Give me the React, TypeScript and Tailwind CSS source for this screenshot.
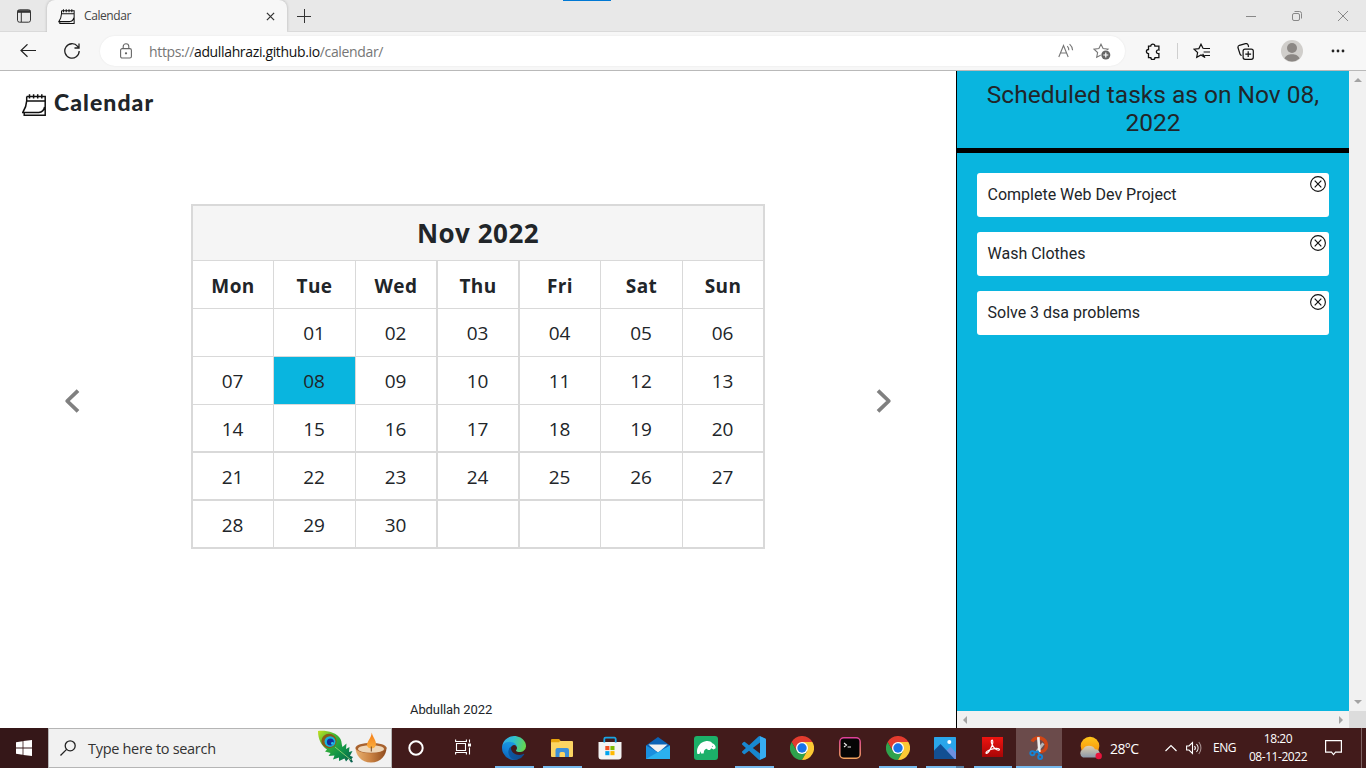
import React from "react";

const weekdays = ["Mon", "Tue", "Wed", "Thu", "Fri", "Sat", "Sun"];
const weeks = [
  ["", "01", "02", "03", "04", "05", "06"],
  ["07", "08", "09", "10", "11", "12", "13"],
  ["14", "15", "16", "17", "18", "19", "20"],
  ["21", "22", "23", "24", "25", "26", "27"],
  ["28", "29", "30", "", "", "", ""],
];
const tasks = ["Complete Web Dev Project", "Wash Clothes", "Solve 3 dsa problems"];
const colBorder = ["border-r", "border-r", "border-r-2", "border-r-2", "border-r", "border-r", "border-r-2"];

function CalendarIcon({ className }: { className: string }) {
  return (
    <svg viewBox="0 0 24 22" className={className} fill="none" stroke="#111" strokeWidth="1.5">
      <path d="M4.7 2.6H23.2V21.2H2.2V18.6M4.7 2.6V6.9H23.2M4.7 6.9C4.5 12 2.6 15.6.8 18.5H16.8C20 18.2 22 16 22.6 13M7.5.2V4.6M11.6.2V4.6M15.7.2V4.6M19.8.2V4.6" />
    </svg>
  );
}

function TabStrip() {
  return (
    <div className="relative flex h-8 bg-[#e8e8e8]">
      <div className="absolute left-[563px] top-0 h-px w-12 bg-[#0078d4]" />
      <div className="flex w-[47px] items-center pl-[17px] border-b border-[#dadada]">
        <svg viewBox="0 0 14 14" className="h-[14px] w-[14px]" fill="none" stroke="#333" strokeWidth="1">
          <rect x=".5" y=".8" width="13" height="12.4" rx="2" />
          <path d="M.5 2.5H13.5" strokeWidth="2.6" />
          <path d="M4.3 3V13" />
        </svg>
      </div>
      <div className="flex w-[240px] items-center rounded-t-lg bg-[#f7f7f7] pl-[11px] pr-[12px] shadow-[0_0_3px_rgba(0,0,0,0.25)]">
        <CalendarIcon className="h-[15px] w-[17px]" />
        <span className="ml-[9px] flex-1 text-[12px] tracking-[-0.42px] text-[#444]">Calendar</span>
        <svg viewBox="0 0 10 10" className="h-[9px] w-[9px]" stroke="#333" strokeWidth="1.4">
          <path d="M1 1L9 9M9 1L1 9" />
        </svg>
      </div>
      <div className="flex flex-1 items-center border-b border-[#dadada] pl-[10px]">
        <svg viewBox="0 0 14 14" className="h-[14px] w-[14px]" stroke="#333" strokeWidth="1">
          <path d="M0 7.5H14M7.500 0V14" />
        </svg>
        <div className="flex-1" />
        <div className="flex items-center gap-[36px] pr-[18px]">
          <svg viewBox="0 0 10 10" className="h-[10px] w-[10px]" stroke="#888">
            <path d="M0 5.5H10" />
          </svg>
          <svg viewBox="0 0 10 10" className="h-[10px] w-[10px]" fill="none" stroke="#888">
            <rect x=".5" y="2.5" width="7" height="7" rx="1.5" />
            <path d="M2.5.5H7.5A2 2 0 0 1 9.5 2.5V7.5" />
          </svg>
          <svg viewBox="0 0 10 10" className="h-[10px] w-[10px]" stroke="#888">
            <path d="M0 0L10 10M10 0L0 10" />
          </svg>
        </div>
      </div>
    </div>
  );
}

const star = "M8 1.2L10.1 5.6L15 6.2L11.4 9.5L12.3 14.3L8 12L3.7 14.3L4.6 9.5L1 6.2L5.9 5.6Z";

function Toolbar() {
  return (
    <div className="relative z-10 flex h-[39px] items-center border-b border-[#b9b9b9] bg-[#f7f7f7] pl-5">
      <svg viewBox="0 0 16 14" className="h-[14px] w-4" fill="none" stroke="#222" strokeWidth="1.2">
        <path d="M16 6.5H1M7.500.3L1 6.500L7.500 12.700" />
      </svg>
      <svg viewBox="0 0 16 16" className="ml-7 h-4 w-4" fill="none" stroke="#222" strokeWidth="1.3">
        <path d="M15.2 8A7.2 7.2 0 1 1 13.6 3.4L15 5M15 .5V5H10.5" />
      </svg>
      <div className="ml-5 flex h-[30px] w-[1025px] items-center rounded-full bg-white pl-5 pr-[14px] shadow-[0_0_2px_rgba(0,0,0,0.08)]">
        <svg viewBox="0 0 12 16" className="h-4 w-3 shrink-0" fill="none" stroke="#666" strokeWidth="1.1">
          <rect x=".6" y="5.6" width="10.8" height="9.4" rx="1.6" />
          <path d="M3.2 5.6V3.6A2.8 2.8 0 0 1 8.8 3.6V5.6" />
          <circle cx="6" cy="10.3" r=".6" fill="#666" />
        </svg>
        <span className="ml-[17px] flex-1 text-[14px] tracking-[-0.35px] text-[#767676]">
          https://<span className="text-[#111]">adullahrazi.github.io</span>/calendar/
        </span>
        <svg viewBox="0 0 16 16" className="h-4 w-4" fill="none" stroke="#767676" strokeWidth="1.1">
          <path d="M.8 14L5.5 2.5L10.2 14M2.4 10H8.6M9.3 3.2A5.5 5.5 0 0 1 10.8 7.3M11.6 1.2A9 9 0 0 1 14.6 7.3" />
        </svg>
        <svg viewBox="0 0 18 17" className="ml-[19px] h-[17px] w-[18px]" fill="none">
          <path d={star} stroke="#767676" strokeWidth="1.1" />
          <circle cx="12.8" cy="12" r="5.2" fill="#fff" />
          <circle cx="12.8" cy="12" r="4.5" fill="#666" />
          <path d="M10.3 12H15.3M12.8 9.5V14.5" stroke="#fff" strokeWidth="1.2" />
        </svg>
      </div>
      <svg viewBox="0 0 16 17" className="ml-[20px] h-[17px] w-4" fill="none" stroke="#111" strokeWidth="1.3">
        <path d="M3.500 3.200H5.700A2.100 2.100 0 0 1 9.900 3.200H13.900V7A1.900 1.900 0 1 0 13.900 10.600V14.600H10A2.100 2.100 0 0 1 5.800 14.600H3.500V10.700A2.100 2.100 0 0 1 3.500 6.500Z" />
      </svg>
      <div className="ml-[16px] h-4 w-px bg-[#cfcfcf]" />
      <svg viewBox="0 0 17 16" className="ml-[15px] h-4 w-[17px]" fill="none" stroke="#111" strokeWidth="1.2">
        <path d="M9.6 10.8L12 14.5L8 12L3.7 14.3L4.6 9.5L1 6.2L5.9 5.6L8 1.2L10.1 5.4M10.2 5.5H17M10.6 9H17M11.5 12.5H17" />
      </svg>
      <svg viewBox="0 0 17 17" className="ml-[27px] h-[17px] w-[17px]" fill="none" stroke="#111" strokeWidth="1.2">
        <rect x="6.1" y="6.1" width="10.2" height="10.2" rx="2" />
        <path d="M11.2 8.3V14.1M8.3 11.2H14.1M4.7 12.5A2.2 2.2 0 0 1 3 11L1 4.8A2.2 2.2 0 0 1 2.4 2.3L8.5.7A2.2 2.2 0 0 1 11.2 2.2L11.6 4" />
      </svg>
      <svg viewBox="0 0 22 22" className="ml-[27px] h-[22px] w-[22px]">
        <circle cx="11" cy="11" r="11" fill="#d0cecb" />
        <circle cx="11" cy="8" r="5" fill="#8b8784" />
        <path d="M3.5 18.6C5 12.9 17 12.9 18.5 18.6A11 11 0 0 1 3.5 18.6Z" fill="#8b8784" />
      </svg>
      <svg viewBox="0 0 14 4" className="ml-7 h-1 w-[14px]" fill="#222">
        <circle cx="2" cy="2" r="1.4" /><circle cx="7" cy="2" r="1.4" /><circle cx="12" cy="2" r="1.4" />
      </svg>
    </div>
  );
}

function Chevron({ d }: { d: string }) {
  return (
    <svg viewBox="0 0 16 24" className="h-6 w-4" fill="none" stroke="#808080" strokeWidth="3.8">
      <path d={d} strokeLinejoin="round" />
    </svg>
  );
}

function MonthTable() {
  return (
    <div className="w-[574px] border-l-2 border-t-2 border-[#d9d9d9] text-[#212529]">
      <div className="flex h-[55px] items-center justify-center border-b border-r-2 border-[#d9d9d9] bg-[#f5f5f5] text-[26px] font-bold tracking-[0.5px]">
        Nov 2022
      </div>
      <div className="grid h-12 grid-cols-[81px_82px_82px_82px_81px_82px_82px]">
        {weekdays.map((d, i) => (
          <div key={d} className={`flex items-center justify-center border-b border-[#d9d9d9] pt-[3px] text-[19px] font-bold tracking-[0.4px] ${colBorder[i]}`}>
            {d}
          </div>
        ))}
      </div>
      {weeks.map((w, r) => (
        <div key={r} className="grid h-12 grid-cols-[81px_82px_82px_82px_81px_82px_82px]">
          {w.map((d, i) => (
            <div
              key={i}
              className={`flex items-center justify-center border-[#d9d9d9] pt-[2px] pr-[1px] text-[19px] ${colBorder[i]} ${r < 2 ? "border-b" : "border-b-2"} ${d === "08" ? "bg-[#09b5df]" : ""}`}
            >
              {d}
            </div>
          ))}
        </div>
      ))}
    </div>
  );
}

function TaskPanel() {
  return (
    <div className="flex w-[410px] shrink-0 border-l border-black font-['Roboto',sans-serif] text-[#212529]">
      <div className="flex w-[392px] flex-col">
        <div className="flex-1 bg-[#09b5df]">
          <h2 className="h-[82px] border-b-[5px] border-black px-5 pt-[10px] text-center text-[24.5px] leading-7">
            Scheduled tasks as on Nov 08, 2022
          </h2>
          <div className="flex flex-col gap-[15px] p-5">
            {tasks.map((t) => (
              <div key={t} className="flex h-11 justify-between rounded-[3px] bg-white pl-[10.5px] pr-[3px]">
                <span className="pt-[10px] text-[16px] leading-6">{t}</span>
                <svg viewBox="0 0 16 16" className="mt-[3px] h-4 w-4" fill="none" stroke="#111">
                  <circle cx="8" cy="8" r="7.4" strokeWidth="1.1" />
                  <path d="M4.7 4.7L11.3 11.3M11.3 4.7L4.7 11.3" strokeWidth="1.2" />
                </svg>
              </div>
            ))}
          </div>
        </div>
        <div className="flex h-[17px] items-center justify-between bg-[#f1f1f1] px-[6px]">
          <svg viewBox="0 0 4 8" className="h-2 w-1" fill="#a3a3a3"><path d="M4 0V8L0 4Z" /></svg>
          <svg viewBox="0 0 4 8" className="h-2 w-1" fill="#a3a3a3"><path d="M0 0V8L4 4Z" /></svg>
        </div>
      </div>
      <div className="flex w-[17px] flex-col">
        <div className="flex flex-1 flex-col items-center justify-between bg-[#f1f1f1] py-[7px]">
          <svg viewBox="0 0 8 4" className="h-1 w-2" fill="#a3a3a3"><path d="M0 4H8L4 0Z" /></svg>
          <svg viewBox="0 0 8 4" className="h-1 w-2" fill="#a3a3a3"><path d="M0 0H8L4 4Z" /></svg>
        </div>
        <div className="h-[17px] bg-[#dcdcdc]" />
      </div>
    </div>
  );
}

function EdgeLogo() {
  return (
    <svg viewBox="0 0 256 256" className="h-6 w-6">
      <defs>
        <linearGradient id="e1" x1="0" x2="1"><stop offset="0" stopColor="#0c59a4" /><stop offset="1" stopColor="#114a8b" /></linearGradient>
        <linearGradient id="e2" x1=".6" y1="0" x2=".2" y2="1"><stop offset="0" stopColor="#1b9de2" /><stop offset=".5" stopColor="#1383d8" /><stop offset="1" stopColor="#0b5cb0" /></linearGradient>
        <linearGradient id="e3" x1="0" y1=".3" x2="1" y2=".5"><stop offset="0" stopColor="#35a9e6" /><stop offset=".45" stopColor="#2fbfcf" /><stop offset="1" stopColor="#66d74c" /></linearGradient>
      </defs>
      <g transform="translate(-4.6 -4.9)">
        <path fill="url(#e1)" d="M235.68 195.45a93.73 93.73 0 0 1-10.54 4.71 101.87 101.87 0 0 1-35.9 6.46c-47.32 0-88.54-32.55-88.54-74.32A31.48 31.48 0 0 1 117.13 105c-42.8 1.8-53.8 46.4-53.8 72.53 0 73.88 68.09 81.37 82.76 81.37 7.91 0 19.84-2.3 27-4.56l1.31-.44a128.34 128.34 0 0 0 66.6-52.8 4 4 0 0 0-5.32-5.65z" />
        <path fill="url(#e2)" d="M110.34 246.34A79.2 79.2 0 0 1 87.6 225a80.72 80.72 0 0 1 29.53-120c3.12-1.47 8.45-4.13 15.54-4a32.35 32.35 0 0 1 25.69 13 31.88 31.88 0 0 1 6.36 18.66c0-.21 24.46-79.6-80-79.6-43.9 0-80 41.66-80 78.21a130.15 130.15 0 0 0 12.11 56 128 128 0 0 0 156.38 67.11 75.55 75.55 0 0 1-62.78-8z" />
        <path fill="url(#e3)" d="M156.94 153.78c-.81 1.05-3.3 2.5-3.3 5.66 0 2.61 1.7 5.12 4.72 7.23 14.38 10 41.49 8.68 41.56 8.68a59.56 59.56 0 0 0 30.27-8.35 61.38 61.38 0 0 0 30.43-52.88c.26-22.41-8-37.31-11.34-43.91C228.09 28.76 182.35 5 132.61 5a128 128 0 0 0-128 126.2c.48-36.54 36.8-66.05 80-66.05 3.5 0 23.46.34 42 10.07 16.34 8.58 24.9 18.94 30.85 29.21 6.18 10.67 7.28 24.15 7.28 29.52s-2.74 13.33-7.8 19.83z" />
      </g>
    </svg>
  );
}

function ChromeLogo() {
  return (
    <svg viewBox="0 0 48 48" className="h-6 w-6">
      <path fill="#e33b2e" d="M24 12H44.8A24 24 0 0 0 3.2 12L13.6 30Z" />
      <path fill="#2fa24c" d="M13.6 30L3.2 12A24 24 0 0 0 24 48L34.4 30Z" />
      <path fill="#fcc934" d="M34.4 30L24 48A24 24 0 0 0 44.8 12H24Z" />
      <circle cx="24" cy="24" r="12" fill="#fff" />
      <circle cx="24" cy="24" r="9.4" fill="#1a73e8" />
    </svg>
  );
}

function ExplorerLogo() {
  return (
    <svg viewBox="0 0 22 20" className="h-5 w-[22px]">
      <rect y="3" width="22" height="16" rx="1" fill="#fcd462" />
      <path fill="#e8a30c" d="M0 2A1 1 0 0 1 1 1H8L9.5 2.6L8 4.2H0Z" />
      <path fill="#3c8fd9" d="M4.5 19V12A2 2 0 0 1 6.5 10H16A2 2 0 0 1 18 12V19H14V15.5A1.5 1.5 0 0 0 12.5 14H10A1.5 1.5 0 0 0 8.5 15.5V19Z" />
    </svg>
  );
}

function StoreLogo() {
  return (
    <svg viewBox="0 0 24 24" className="h-6 w-6">
      <path d="M.5 6H23.5V20.5A3 3 0 0 1 20.5 23.5H3.5A3 3 0 0 1 .5 20.5Z" fill="#f4f4f4" />
      <path d="M6.3 6.5V3A1.3 1.3 0 0 1 7.6 1.7H16.4A1.3 1.3 0 0 1 17.7 3V6.5" fill="none" stroke="#19a5e4" strokeWidth="1.8" />
      <path d="M7.3 10H11.4V14.1H7.3Z" fill="#f25022" />
      <path d="M12.4 10H16.5V14.1H12.4Z" fill="#7fba00" />
      <path d="M7.3 15.1H11.4V19.2H7.3Z" fill="#00a4ef" />
      <path d="M12.4 15.1H16.5V19.2H12.4Z" fill="#ffb900" />
    </svg>
  );
}

function MailLogo() {
  return (
    <svg viewBox="0 0 24 22" className="h-[22px] w-6">
      <path fill="#0b63b5" d="M0 8.5L12 0L24 8.5V14H0Z" />
      <path fill="#f1f1f1" d="M2.5 7.5H21.5L13 15H11Z" />
      <path fill="#1a8fdf" d="M0 8.5L24 22H0Z" />
      <path fill="#2bb1ef" d="M24 8.5L11.8 15.2L0 22H24Z" />
    </svg>
  );
}

function BearLogo() {
  return (
    <svg viewBox="0 0 24 24" className="h-6 w-6">
      <rect width="24" height="24" rx="3" fill="#1cb069" />
      <path fill="#fff" d="M3 16C2.8 10.5 6.5 6 11.5 5.2C14 4.6 17 5.2 18.3 7.2C20.5 8 22 10 21.6 12.3L19.6 13.6L17.2 12.2L16 14H13.8L13 12.8C11.5 12.8 10.4 13.7 10 15.2L9.6 17.6H7L6.6 15.2L5.4 18H3.4Z" />
      <circle cx="18.4" cy="10.3" r=".5" fill="#1cb069" />
    </svg>
  );
}

function CodeLogo() {
  return (
    <svg viewBox="0 0 24 24" className="h-6 w-6">
      <path fill="#1887d0" d="M23.15 2.587L18.21.21a1.494 1.494 0 0 0-1.705.29l-9.46 8.63-4.12-3.128a.999.999 0 0 0-1.276.057L.327 7.261A1 1 0 0 0 .326 8.74L3.899 12 .326 15.26a1 1 0 0 0 .001 1.479L1.65 17.94a.999.999 0 0 0 1.276.057l4.12-3.128 9.46 8.63a1.492 1.492 0 0 0 1.704.29l4.942-2.377A1.5 1.5 0 0 0 24 20.06V3.939a1.5 1.5 0 0 0-.85-1.352zm-5.146 14.861L10.826 12l7.178-5.448v10.896z" />
      <path fill="#37adf2" d="M18 .3L23.15 2.587A1.5 1.5 0 0 1 24 3.939V20.06A1.5 1.5 0 0 1 23.15 21.4L18 23.8Z" />
    </svg>
  );
}

function TerminalLogo() {
  return (
    <svg viewBox="0 0 22 22" className="h-[22px] w-[22px]">
      <defs>
        <linearGradient id="t1" x1="0" y1="0" x2="0" y2="1"><stop offset="0" stopColor="#e0409a" /><stop offset="1" stopColor="#f3a35c" /></linearGradient>
      </defs>
      <rect x=".8" y=".8" width="20.4" height="20.4" rx="4" fill="#050505" stroke="url(#t1)" strokeWidth="1.5" />
      <path d="M5 6L7.5 8L5 10M8.6 10H12" fill="none" stroke="#eee" strokeWidth="1.1" />
    </svg>
  );
}

function PhotosLogo() {
  return (
    <svg viewBox="0 0 22 22" className="h-[22px] w-[22px]">
      <rect width="22" height="22" rx=".6" fill="#2aa6ea" />
      <path fill="#6d8fe0" d="M11 15L16.5 9.8L22 15.5V22H11Z" />
      <path fill="#134f93" d="M0 13.5L6.5 7L20.5 22H0Z" />
      <circle cx="15.3" cy="5" r="2" fill="#fff" />
    </svg>
  );
}

function AcrobatLogo() {
  return (
    <svg viewBox="0 0 21 20" className="mr-[1px] mb-[3px] h-5 w-[21px]">
      <defs>
        <linearGradient id="a1" x1="0" y1="0" x2="0" y2="1"><stop offset="0" stopColor="#ee1410" /><stop offset="1" stopColor="#a80606" /></linearGradient>
      </defs>
      <rect width="21" height="20" fill="url(#a1)" />
      <path d="M9.8 3.2C8.4 4 10 9 13.2 11.8C15.5 13.6 17.6 13.5 17.5 12.4C17.3 10.8 11.8 11.2 7.8 12.8C4 14.3 3.3 16.4 4.5 16.4C6.3 16.4 10.6 9.2 10.8 5.6C10.9 3.6 10.4 2.8 9.8 3.2Z" fill="none" stroke="#fff" strokeWidth="1.1" />
    </svg>
  );
}

function SnipLogo() {
  return (
    <svg viewBox="0 0 20 24" className="h-6 w-5" fill="none">
      <path d="M3.200 5.600C4.500 1.900 9.500 1 13 2.600C18.200 5 18.600 11.500 15.400 14.300C13.800 15.600 11.500 15.800 9.800 15.200" stroke="#cf4515" strokeWidth="3.400" />
      <path d="M14.400 7.400L8 15.400" stroke="#b5b5b5" strokeWidth="2.800" />
      <path d="M9.300 1.200L10.400 16" stroke="#eee" strokeWidth="2.600" />
      <circle cx="3.400" cy="17.200" r="2.100" stroke="#1683d6" strokeWidth="1.900" />
      <circle cx="11.200" cy="21" r="2" stroke="#1683d6" strokeWidth="1.900" />
      <path d="M5.300 16.500L8.800 15.500L10.600 18.600" stroke="#1683d6" strokeWidth="2" />
    </svg>
  );
}

function Feather() {
  return (
    <svg viewBox="0 0 37 34" className="mb-[2px] h-[34px] w-[37px]">
      <defs>
        <linearGradient id="f1" x1="0" y1="0" x2="1" y2="1"><stop offset="0" stopColor="#c8e020" /><stop offset=".3" stopColor="#42b833" /><stop offset=".65" stopColor="#109447" /><stop offset="1" stopColor="#075a50" /></linearGradient>
      </defs>
      <path fill="url(#f1)" d="M1 1C8 0 20 2 23.5 9C25 12 24.5 15 25.5 17L29.5 13.5L29 19L32.5 17L32 22L35.5 21L33 25.8L36 27L34.5 29L36 32L34 32.5L31.5 28.8L29 31.5L27.5 28.5L22 31L22 27.5L16 29.5L17.5 25.5L11.5 26L13.5 23L8 21.5L10 19.5C4 15.5 1 9 1 1Z" />
      <ellipse cx="12" cy="11" rx="7.6" ry="7.2" fill="#8a5b16" />
      <ellipse cx="13" cy="11.6" rx="5.5" ry="5.3" fill="#16b3dc" />
      <circle cx="13.4" cy="12" r="3.5" fill="#122f9c" />
      <circle cx="15.4" cy="13.4" r="1.4" fill="#25c4ea" />
      <path d="M18 17L34 30" stroke="#b9e37c" strokeWidth=".7" />
    </svg>
  );
}

function Diya() {
  return (
    <svg viewBox="0 0 32 32" className="h-8 w-8">
      <defs>
        <linearGradient id="d1" x1="0" x2="1"><stop offset="0" stopColor="#e9b271" /><stop offset=".5" stopColor="#c98142" /><stop offset="1" stopColor="#8d4a1e" /></linearGradient>
        <linearGradient id="d2" x1="0" y1="0" x2="0" y2="1"><stop offset="0" stopColor="#f47a13" /><stop offset="1" stopColor="#fcb040" /></linearGradient>
      </defs>
      <path fill="url(#d1)" d="M.5 15.5C.5 23 6 30.5 16 30.5S31.5 23 31.5 15.5Z" />
      <ellipse cx="16" cy="16" rx="15.5" ry="5.2" fill="#a8622f" />
      <ellipse cx="16" cy="17" rx="13" ry="3.8" fill="#eed6b8" />
      <path fill="url(#d2)" d="M16.800 .5C17.500 5 21.600 8.500 20.900 13C20 17.600 13 17.600 12 13.500C11.500 9.500 16.300 6.500 16.800 .5Z" />
      <path d="M16.300 14.500V19.500" stroke="#754522" strokeWidth="1" />
    </svg>
  );
}

type CellProps = { width?: string; bar?: string; active?: boolean; children: React.ReactNode };

function TaskCell({ width = "w-12", bar, active, children }: CellProps) {
  return (
    <div className={`flex h-10 shrink-0 flex-col items-center ${width} ${active ? "bg-[#6b4b4b]" : ""}`}>
      <div className="flex h-[38px] items-center justify-center pt-[2px]">{children}</div>
      <div className={`h-[2px] ${bar ? `${bar} bg-[#76b9ed]` : ""}`} />
    </div>
  );
}

function Taskbar() {
  return (
    <div className="flex h-10 bg-[#421b1b] text-white">
      <div className="flex w-12 items-center justify-center bg-[#351718]">
        <svg viewBox="0 0 16 16" className="h-4 w-4" fill="#fff">
          <path d="M0 2.2L6.6 1.3V7.6H0ZM7.4 1.1L16 0V7.6H7.4ZM0 8.4H6.6V14.7L0 13.8ZM7.4 8.4H16V16L7.4 14.9Z" />
        </svg>
      </div>
      <div className="flex w-[344px] items-center border border-[#b5b5b5] bg-[#f1f1f1] pl-[11px] text-[#333]">
        <svg viewBox="0 0 16 16" className="h-4 w-4" fill="none" stroke="#222" strokeWidth="1.3">
          <circle cx="10.2" cy="5.8" r="5" /><path d="M6.6 9.4L.5 15.5" />
        </svg>
        <span className="ml-3 flex-1 pt-[1px] text-[14.5px] tracking-[-0.3px]">Type here to search</span>
        <Feather />
        <div className="ml-[1px] mr-[4px]"><Diya /></div>
      </div>
      <TaskCell>
        <svg viewBox="0 0 16 16" className="h-4 w-4"><circle cx="8" cy="8" r="6.7" fill="none" stroke="#fff" strokeWidth="2" /></svg>
      </TaskCell>
      <TaskCell>
        <svg viewBox="0 0 17 16" className="mr-[1px] mb-[2px] h-4 w-[17px]" fill="none" stroke="#fff" strokeWidth="1.1">
          <path d="M1.5 4.5H10.5V11.5H1.5ZM.6 .5V2.500H11.400V.5M.6 15.500V13.500H11.400V15.500M14.500 .5V3.500M14.500 8.500V15.500" />
          <path d="M13 4.500H16V7.500H13Z" fill="#fff" stroke="none" />
        </svg>
      </TaskCell>
      <div className="w-[2px]" />
      <TaskCell bar="w-[39px]"><EdgeLogo /></TaskCell>
      <TaskCell bar="w-[39px]"><ExplorerLogo /></TaskCell>
      <TaskCell><StoreLogo /></TaskCell>
      <TaskCell><MailLogo /></TaskCell>
      <TaskCell><BearLogo /></TaskCell>
      <TaskCell bar="w-[39px]"><CodeLogo /></TaskCell>
      <TaskCell><ChromeLogo /></TaskCell>
      <TaskCell><TerminalLogo /></TaskCell>
      <TaskCell bar="w-[38px]"><ChromeLogo /></TaskCell>
      <TaskCell width="w-[47px] pr-[1px]" bar="w-[38px] border-r-[8px] border-[#557da2]"><PhotosLogo /></TaskCell>
      <TaskCell width="w-[47px]" bar="w-[38px]"><AcrobatLogo /></TaskCell>
      <TaskCell width="w-[46px]" bar="w-[46px]" active><SnipLogo /></TaskCell>
      <div className="flex flex-1 items-center pl-[16px]">
        <svg viewBox="0 0 24 24" className="h-6 w-6">
          <defs>
            <linearGradient id="w1" x1="0" y1="0" x2="0" y2="1"><stop offset="0" stopColor="#ffc61a" /><stop offset="1" stopColor="#f58a0b" /></linearGradient>
            <linearGradient id="w2" x1="0" y1="0" x2="0" y2="1"><stop offset="0" stopColor="#dfcfae" /><stop offset="1" stopColor="#8b97a8" /></linearGradient>
          </defs>
          <circle cx="12" cy="10" r="9.3" fill="url(#w1)" />
          <path fill="url(#w2)" d="M5 21.5A4.500 4.500 0 0 1 5 13.200C7 9 14.500 8.500 17 13.200C23 13 23.500 21.500 18 21.500Z" />
          <circle cx="20.700" cy="20" r="3.200" fill="#e8143c" />
        </svg>
        <span className="ml-2 w-[30px] text-[14px] tracking-[-0.6px]">28°C</span>
        <svg viewBox="0 0 12 8" className="ml-[25px] h-2 w-3" fill="none" stroke="#fff" strokeWidth="1.2"><path d="M.5 7L6 1.5L11.5 7" /></svg>
        <svg viewBox="0 0 17 14" className="ml-[9px] h-[14px] w-[17px]" fill="none" stroke="#fff" strokeWidth="1.1">
          <path d="M.6 5H3L6.5 1.5V12.5L3 9H.6ZM8.5 5A3 3 0 0 1 8.5 9M10.5 3A6 6 0 0 1 10.5 11" />
          <path d="M12.8 1A9.5 9.5 0 0 1 12.8 13" stroke="#a58f8f" />
        </svg>
        <span className="ml-[10px] w-6 text-[12px] tracking-[-0.5px]">ENG</span>
        <div className="ml-[9px] flex w-[64px] flex-col items-center text-[12px] leading-[18px] tracking-[-0.45px]">
          <span>18:20</span>
          <span className="whitespace-nowrap">08-11-2022</span>
        </div>
        <svg viewBox="0 0 17 16" className="ml-[15px] h-4 w-[17px]" fill="none" stroke="#fff" strokeWidth="1.2">
          <path d="M.6 .7H16.4V12.2H10.5L8.5 14.6L6.5 12.2H.6Z" />
        </svg>
        <div className="ml-auto mr-1 h-10 w-px bg-[#7d6262]" />
      </div>
    </div>
  );
}

export default function App() {
  return (
    <div className="flex h-[768px] w-[1366px] flex-col overflow-hidden bg-white font-['Open_Sans','Noto_Sans',sans-serif]">
      <TabStrip />
      <Toolbar />
      <div className="flex h-[657px]">
        <main className="flex w-[956px] flex-col">
          <header className="flex h-[133px] items-start pl-[22px] pt-[15px]">
            <CalendarIcon className="mt-[8px] h-[22px] w-6" />
            <h1 className="ml-2 font-['Lato',sans-serif] text-[23px] font-black leading-8 tracking-[1.05px] text-[#212529]">Calendar</h1>
          </header>
          <div className="flex h-[345px] justify-between px-[64px]">
            <div className="mt-[185px]"><Chevron d="M14 1.6L3.2 12L14 22.4" /></div>
            <MonthTable />
            <div className="mt-[185px]"><Chevron d="M2 1.6L12.8 12L2 22.4" /></div>
          </div>
          <footer className="mt-auto pb-[8px] pl-[410px] font-['Roboto',sans-serif] text-[13px] leading-5 tracking-[-0.08px] text-[#212529]">
            Abdullah 2022
          </footer>
        </main>
        <TaskPanel />
      </div>
      <Taskbar />
    </div>
  );
}
